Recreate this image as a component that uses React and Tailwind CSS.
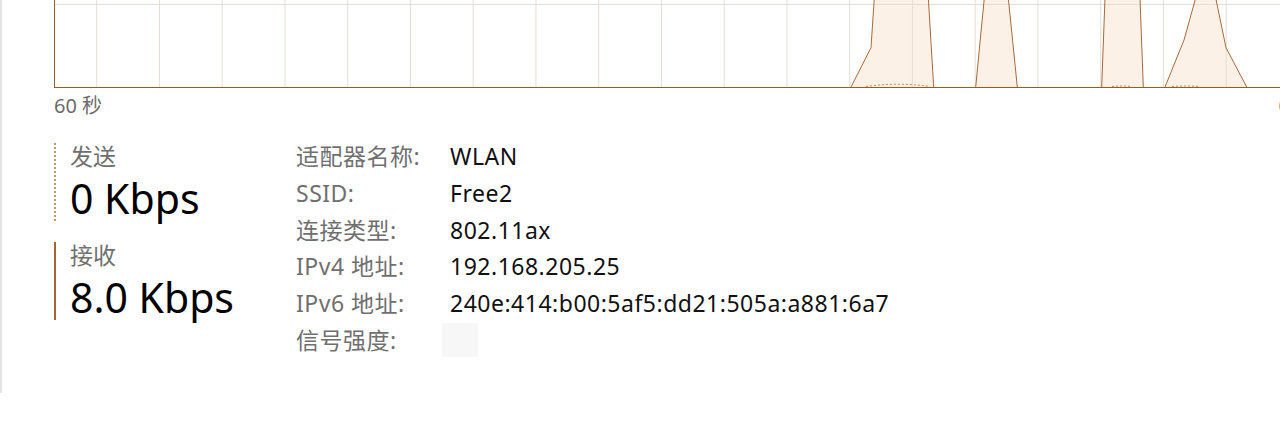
import React from "react";

const gridXs = Array.from({ length: 19 }, (_, i) => 96.7 + i * 62.75);

// receive peaks, in page coordinates (svg viewBox starts at x=55)
const peaks = [
  [[851, 87], [871, 47.7], [874.3, -2], [928.3, -2], [933.7, 87]],
  [[975.7, 87], [984.3, -2], [1008.3, -2], [1017.3, 87]],
  [[1101.7, 87], [1105, -2], [1140, -2], [1143.3, 87]],
  [[1165, 87], [1184, 40], [1195.7, -2], [1215.7, -2], [1226, 47.7], [1246.7, 87]],
];

const toPts = (pts) => pts.map((p) => p.join(",")).join(" ");

const Chart = () => (
  <div className="h-[88px] border-l border-b border-[#9a5a24]">
    <svg
      className="block"
      width="1225"
      height="87"
      viewBox="55 0 1225 87"
    >
      {peaks.map((p, i) => (
        <polygon key={"f" + i} points={toPts(p)} fill="#fcf1e7" />
      ))}
      <line x1="55" y1="4.5" x2="1280" y2="4.5" stroke="#e6ddd5" strokeWidth="1" />
      {gridXs.map((x) => (
        <line key={x} x1={x} y1="0" x2={x} y2="87" stroke="#e6ddd5" strokeWidth="1" />
      ))}
      {peaks.map((p, i) => {
        const left = p.filter((pt, j) => j < p.length / 2);
        const right = p.filter((pt, j) => j >= p.length / 2);
        return (
          <g key={"s" + i} fill="none" stroke="#a8693a" strokeWidth="1">
            <polyline points={toPts(left)} />
            <polyline points={toPts(right)} />
          </g>
        );
      })}
      {/* send line (dashed) */}
      <g fill="none" stroke="#d0834a" strokeWidth="1" strokeDasharray="2 2">
        <path d="M866 86.5 Q897 82 930 86.5" />
        <path d="M1112 86.5 Q1122 85.5 1132 86.5" />
        <path d="M1172 86.5 Q1186 85.5 1200 86.5" />
      </g>
    </svg>
  </div>
);

const rows = [
  ["适配器名称:", "WLAN"],
  ["SSID:", "Free2"],
  ["连接类型:", "802.11ax"],
  ["IPv4 地址:", "192.168.205.25"],
  ["IPv6 地址:", "240e:414:b00:5af5:dd21:505a:a881:6a7"],
];

const RateBlock = ({ label, value, dotted }) => (
  <div
    className={`pl-[14px] border-l-2 ${
      dotted ? "border-dotted border-[#c99467]" : "border-solid border-[#a5652e]"
    }`}
  >
    <div className="text-[23px] leading-[26px] text-[#6f6f6f]">{label}</div>
    <div className="mt-[6px] text-[41px] leading-[46px] text-black">{value}</div>
  </div>
);

export default function App() {
  return (
    <div
      className="h-[393px] overflow-hidden border-l-2 border-[#e3e3e3] bg-white pl-[52px]"
      style={{ fontFamily: '"Noto Sans", "Noto Sans CJK SC", sans-serif' }}
    >
      <Chart />

      {/* axis labels */}
      <div className="mt-[6px] flex h-[24px] text-[20px] leading-[24px] text-[#6b6b6b]">
        <span>60 秒</span>
        <span className="ml-auto mr-[-10px]">0</span>
      </div>

      <div className="mt-[23px] flex items-start">
        <div className="w-[242px] pt-[2px] flex flex-col gap-[21px]">
          <RateBlock label="发送" value="0 Kbps" dotted />
          <RateBlock label="接收" value="8.0 Kbps" />
        </div>

        <div className="-mt-[3px] flex flex-col text-[23px] leading-[36.8px] tracking-[0.5px]">
          {rows.map(([k, v]) => (
            <div key={k} className="flex">
              <div className="w-[154px] text-[#6f6f6f]">{k}</div>
              <div className="text-[#111]">{v}</div>
            </div>
          ))}
          <div className="flex items-center">
            <div className="w-[154px] text-[#6f6f6f]">信号强度:</div>
            <div className="-ml-2 h-[34px] w-[36px] bg-[#f7f7f7]"></div>
          </div>
        </div>
      </div>
    </div>
  );
}
